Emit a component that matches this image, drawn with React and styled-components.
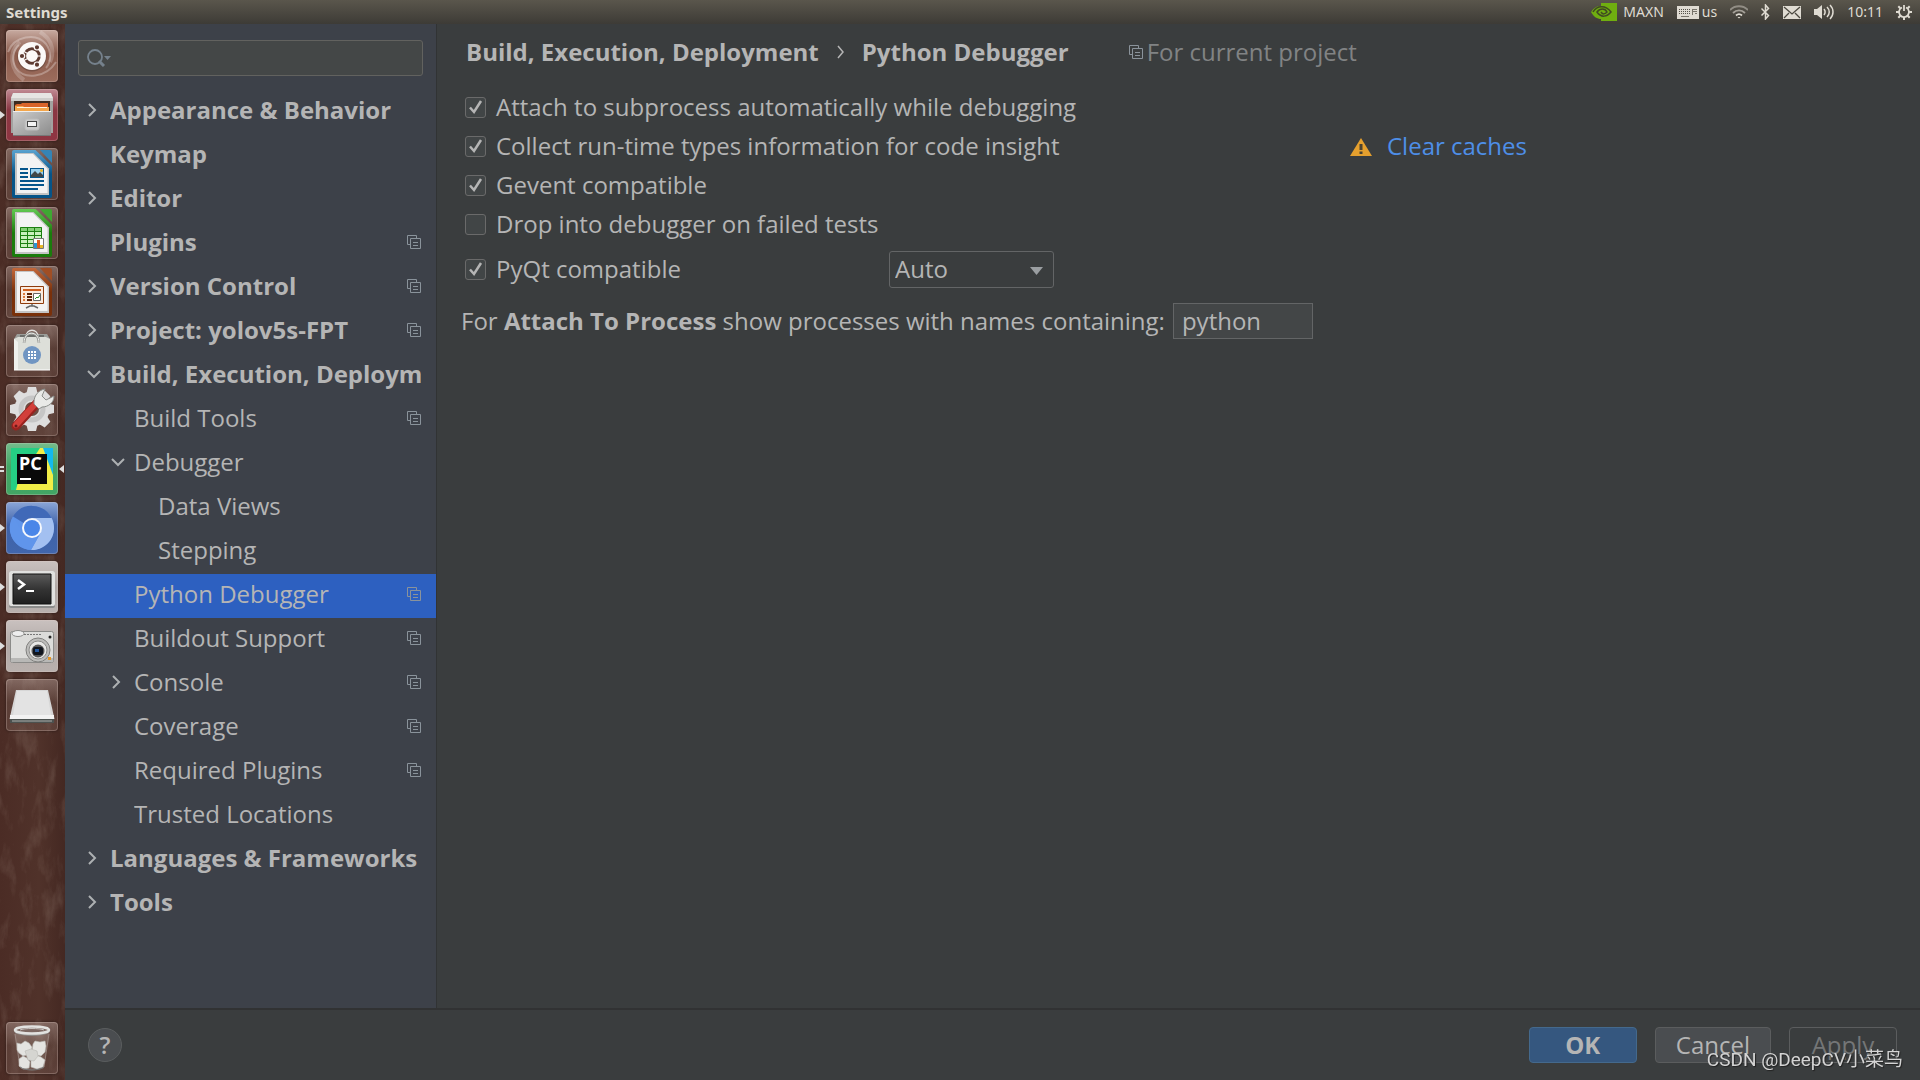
import React, { useState } from 'react';
import styled, { createGlobalStyle, css } from 'styled-components';

const GlobalStyle = createGlobalStyle`
  * {
    box-sizing: border-box;
  }
  body {
    margin: 0;
    background-color: #3a3d3e;
    color: #b5b5b5;
    font-family: "Open Sans", "Noto Sans", sans-serif;
    font-size: 24px;
    line-height: 32px;
  }
  button, input, select {
    font: inherit;
    color: inherit;
  }
  svg {
    display: block;
    flex: none;
  }
`

const Desktop = styled.div`
  display: flex;
  flex-direction: column;
  height: 100vh;
  overflow: hidden;
`

const TopBar = styled.header`
  display: flex;
  align-items: center;
  justify-content: space-between;
  flex: none;
  height: 24px;
  padding: 0 8px 0 6px;
  background: linear-gradient(#5a564c, #3d3b36);
  color: #dfdbd2;
  font-family: "Noto Sans", sans-serif;
  font-size: 14px;
  line-height: 20px;
`

const WindowTitle = styled.strong`
  font-size: 15px;
  font-weight: 700;
`

const Indicators = styled.div`
  display: flex;
  align-items: center;
  gap: 13px;
`

const Indicator = styled.div`
  display: flex;
  align-items: center;
  gap: ${(props) => props.$gap || 3}px;
`

const Body = styled.div`
  display: flex;
  flex: 1;
  min-height: 0;
`

const Launcher = styled.nav`
  position: relative;
  display: flex;
  flex-direction: column;
  justify-content: space-between;
  flex: none;
  width: 65px;
  padding: 6px 0;
  background: linear-gradient(90deg, #4b2c25, #50322a 60%, #442822);
`

const Wood = styled.svg`
  position: absolute;
  top: 0;
  left: 0;
  width: 100%;
  height: 100%;
`

const LauncherList = styled.div`
  display: flex;
  flex-direction: column;
  gap: 7px;
`

const LauncherItem = styled.button`
  position: relative;
  display: block;
  width: 65px;
  height: 52px;
  padding: 0 0 0 6px;
  border: 0;
  background: none;
`

const Tile = styled.span`
  display: block;
  width: 52px;
  height: 52px;
  border-radius: 4px;
  background: ${(props) => props.$fill || 'linear-gradient(rgba(205, 185, 178, 0.42), rgba(120, 95, 86, 0.34) 45%, rgba(120, 92, 84, 0.4))'};
  box-shadow: inset 0 0 0 1px rgba(225, 205, 198, 0.28), 0 0 3px rgba(0, 0, 0, 0.45);
`

const Pip = styled.svg`
  position: absolute;
  top: 21px;
  ${(props) => (props.$right ? 'right: 1px;' : 'left: 0;')}
`

const Dialog = styled.div`
  display: flex;
  flex-direction: column;
  flex: 1;
  min-width: 0;
`

const Panels = styled.div`
  display: flex;
  flex: 1;
  min-height: 0;
`

const Sidebar = styled.aside`
  flex: none;
  width: 372px;
  padding-top: 16px;
  border-right: 1px solid #313334;
  background-color: #3d4149;
`

const SearchBox = styled.label`
  display: flex;
  align-items: center;
  height: 36px;
  margin: 0 13px 14px;
  padding-left: 8px;
  border: 1px solid #62625f;
  border-radius: 3px;
  background-color: #444747;
`

const SearchInput = styled.input`
  flex: 1;
  min-width: 0;
  padding: 0 4px;
  border: 0;
  outline: 0;
  background: none;
`

const TreeRow = styled.button`
  display: flex;
  align-items: center;
  width: 100%;
  height: 44px;
  padding: 0 15px 4px ${(props) => 21 + props.$level * 24}px;
  border: 0;
  background-color: ${(props) => (props.$selected ? '#2d60c0' : 'transparent')};
  text-align: left;
`

const TreeArrow = styled.span`
  flex: none;
  width: 24px;
`

const TreeLabel = styled.span`
  flex: 1;
  min-width: 0;
  overflow: hidden;
  white-space: nowrap;
  ${(props) => props.$bold && css`
    font-weight: 700;
  `}
`

const Content = styled.main`
  flex: 1;
  min-width: 0;
  padding: 12px 24px 0;
`

const Breadcrumbs = styled.h1`
  display: flex;
  align-items: center;
  height: 32px;
  margin: 0 0 20px 5px;
  font-size: 24px;
  line-height: 32px;
  font-weight: 700;
  white-space: nowrap;
`

const CrumbArrow = styled.span`
  padding: 0 18px;
`

const Scope = styled.span`
  display: flex;
  align-items: center;
  gap: 4px;
  margin-left: 60px;
  color: #818384;
  font-weight: 400;
`

const Option = styled.div`
  display: flex;
  align-items: center;
  height: ${(props) => (props.$tall ? 51 : 39)}px;
  padding-left: 4px;
`

const OptionLabel = styled.label`
  display: flex;
  align-items: center;
  gap: 10px;
  min-width: ${(props) => props.$width || 0}px;
  white-space: nowrap;
`

const OptionText = styled.span`
  padding-bottom: 2px;
`

const CheckHolder = styled.span`
  position: relative;
  display: block;
  width: 21px;
  height: 21px;

  svg {
    position: absolute;
    top: 0;
    left: 0;
    pointer-events: none;
  }
`

const CheckInput = styled.input`
  appearance: none;
  display: block;
  width: 21px;
  height: 21px;
  margin: 0;
  border: 1px solid #6a6a6a;
  border-radius: 3px;
  background-color: #414546;
`

const ClearLink = styled.a`
  margin-left: 15px;
  padding-bottom: 2px;
  color: #4e8fe8;
  text-decoration: none;
`

const SelectHolder = styled.span`
  position: relative;

  svg {
    position: absolute;
    top: 16px;
    right: 11px;
    pointer-events: none;
  }
`

const Select = styled.select`
  appearance: none;
  display: block;
  width: 165px;
  height: 37px;
  padding: 0 5px 2px;
  border: 1px solid #636566;
  border-radius: 3px;
  background-color: #3a3d3e;
`

const ProcessRow = styled.div`
  display: flex;
  align-items: center;
  gap: 8px;
  height: 38px;
  margin-top: 7px;
  white-space: nowrap;
`

const ProcessInput = styled.input`
  width: 140px;
  height: 36px;
  padding: 0 8px 2px;
  border: 1px solid #636566;
  background-color: #434647;
`

const Footer = styled.footer`
  display: flex;
  align-items: center;
  gap: 18px;
  flex: none;
  height: 72px;
  padding: 0 23px;
  border-top: 2px solid #313233;
`

const HelpButton = styled.button`
  width: 34px;
  height: 34px;
  margin-right: auto;
  padding: 0;
  border: 1px solid #5a5d5e;
  border-radius: 50%;
  background-color: #4a4d50;
  font-weight: 600;
`

const DialogButton = styled.button`
  min-width: 108px;
  height: 36px;
  padding: 0 20px;
  border: 1px solid ${(props) => (props.$primary ? '#44698c' : '#5b5d5e')};
  border-radius: 4px;
  background-color: ${(props) => (props.$primary ? '#35577f' : '#4a4d50')};
  font-weight: ${(props) => (props.$primary ? 700 : 400)};
  line-height: 32px;

  &:disabled {
    background-color: transparent;
    color: #747677;
  }
`

const Watermark = styled.div`
  position: fixed;
  right: 17px;
  bottom: 6px;
  color: #d4d4d4;
  font-family: Roboto, "Noto Sans CJK SC", sans-serif;
  font-size: 19px;
  line-height: 28px;
  text-shadow: 1px 1px 1px #222222;
  pointer-events: none;
`

const UbuntuIcon = () => (
  <svg width="52" height="52" viewBox="0 0 52 52">
    <g fill="none" stroke="#fff">
      <path d="M2 22C8 6 30 2 40 14c6 8 5 18 0 24" strokeOpacity=".28" strokeWidth="2" />
      <path d="M50 32C40 48 18 50 10 38 5 30 7 20 13 15" strokeOpacity=".28" strokeWidth="2" />
      <path d="M18 50C4 40 2 22 14 12M34 2c14 8 14 22 10 30" strokeOpacity=".2" strokeWidth="4" />
    </g>
    <circle cx="26" cy="27" r="14.5" fill="#000" opacity=".2" />
    <circle cx="26" cy="26" r="14" fill="#fbf8f7" />
    <circle cx="26" cy="26" r="7.2" fill="none" stroke="#5d3a31" strokeWidth="3" />
    <g fill="#5d3a31" stroke="#fbf8f7" strokeWidth="1.2">
      <circle cx="16" cy="26" r="2.7" />
      <circle cx="31" cy="17.3" r="2.7" />
      <circle cx="31" cy="34.7" r="2.7" />
    </g>
    <path d="M26 26L18 21.500M26 26L18 30.500M26 26h10" stroke="#fbf8f7" strokeWidth="1.200" />
    <circle cx="26" cy="26" r="5.6" fill="#fbf8f7" />
  </svg>
)

const FilesIcon = () => (
  <svg width="52" height="52" viewBox="0 0 52 52">
    <defs>
      <linearGradient id="drawer" x1="0" y1="0" x2="1" y2="1">
        <stop offset="0" stopColor="#cdcdcd" />
        <stop offset="1" stopColor="#8b8b8b" />
      </linearGradient>
    </defs>
    <path d="M7 4h38l2 5v35H5V9z" fill="#a3a2a0" />
    <path d="M7 4h38l2 5H5z" fill="#e6e5e3" />
    <path d="M5 9h42v3H5z" fill="#cfcecc" />
    <path d="M8 12h36v11H8z" fill="#3c2a20" />
    <path d="M9 16l2-1h4l1-1h26v9H9z" fill="#d9642a" />
    <path d="M9 17h8l1 1h25v5H9z" fill="#f4a64b" />
    <path d="M11 18.500h30" stroke="#fff3df" strokeWidth="1" />
    <path d="M7 22h38v25H7z" fill="url(#drawer)" />
    <path d="M7 22.500h38" stroke="#eee" strokeWidth="1" />
    <path d="M7 46.500h38" stroke="#777" strokeWidth="1" />
    <rect x="19" y="30" width="14" height="11" rx="2" fill="#c9c9c9" stroke="#bbb" />
    <rect x="21.500" y="32.500" width="9" height="5" fill="#f4f4f4" stroke="#444" />
  </svg>
)

// page shape shared by the three LibreOffice apps
const OfficePage = ({ light, dark, corner, id, children }) => (
  <svg width="52" height="52" viewBox="0 0 52 52">
    <defs>
      <linearGradient id={id} x1="0" y1="0" x2="0" y2="1">
        <stop offset="0" stopColor={light} />
        <stop offset=".5" stopColor={dark} />
        <stop offset="1" stopColor={dark} />
      </linearGradient>
    </defs>
    <path d="M8 2h21.500L46 18v30a2 2 0 0 1-2 2H8a2 2 0 0 1-2-2V4a2 2 0 0 1 2-2z" fill={`url(#${id})`} />
    <path d="M34 2h10a2 2 0 0 1 2 2v11z" fill={corner} />
    <path d="M9 5h18.500L43 20.500V47H9z" fill="#c4c4c4" />
    <path d="M11 6h16l14.500 15V45H11z" fill="#f3f3f3" />
    {children}
  </svg>
)

const WriterIcon = () => (
  <OfficePage id="writer" light="#5aa3d0" dark="#065488" corner="#3584b5">
    <path d="M14 21h8M14 25h8M14 29h8M14 33h24M14 37h24M14 41h18" stroke="#05558b" strokeWidth="2" />
    <path d="M24 20h14v10H24z" fill="#05558b" />
    <path d="M25 21h12v8H25z" fill="#9bd0ee" />
    <circle cx="35.500" cy="22.500" r="1.500" fill="#e6b429" />
    <path d="M25 29v-2l4-4 3 3 2-2 3 3v2z" fill="#3f4648" />
  </OfficePage>
)

const CalcIcon = () => (
  <OfficePage id="calc" light="#62c952" dark="#1a7c0c" corner="#3fa832">
    <path d="M14 20h22v21H14z" fill="#c9f0bd" />
    <path d="M14 20h22v4H14z" fill="#86d078" />
    <path d="M14.500 20.500h21v20h-21zM14 24.500h22M14 28.500h22M14 32.500h22M14 36.500h22M21.500 20v21M28.500 20v21" fill="none" stroke="#1c8011" />
    <path d="M27.500 31.500h10v10h-10z" fill="#fff" stroke="#777" />
    <path d="M28 36h3v5h-3z" fill="#2c97d3" />
    <path d="M31 33h3v8h-3z" fill="#dd5d1e" />
    <path d="M34 38h3v3h-3z" fill="#e6b92b" />
  </OfficePage>
)

const ImpressIcon = () => (
  <OfficePage id="impress" light="#c3683a" dark="#79300a" corner="#a04e24">
    <path d="M14.500 20.500h23v17h-23z" fill="#fbeadd" stroke="#8e3b0c" />
    <path d="M17 24h18" stroke="#d0601f" strokeWidth="2" />
    <path d="M17 28h2M17 31h2M17 34h2" stroke="#dd7a3c" strokeWidth="2" />
    <path d="M21 28h5M21 31h5M21 34h5" stroke="#5e2205" strokeWidth="2" />
    <path d="M27.500 27.500h7v7h-7z" fill="#fff" stroke="#666" />
    <path d="M29 33l2-2 1 1 2-3" fill="none" stroke="#2a8f2a" />
    <path d="M26 38v2M20 42l4-2h4l4 2" fill="none" stroke="#666" strokeWidth="1.500" />
  </OfficePage>
)

const SoftwareIcon = () => (
  <svg width="52" height="52" viewBox="0 0 52 52">
    <path d="M11 9h30l3 5H8z" fill="#9b9d99" />
    <path d="M14 10h24v3H14z" fill="#6c6e6b" />
    <path d="M8 14l4-2h28l4 2v31H8z" fill="#dddfd9" />
    <path d="M8 14l4 3v28H8z" fill="#f0f1ed" />
    <path d="M8 45h36" stroke="#fff" />
    <path d="M20 12c0-9 12-9 12 0" fill="none" stroke="#e2e2df" strokeWidth="1.500" />
    <path d="M18 18c0-13 15-13 15 0" fill="none" stroke="#8f918d" strokeWidth="2.500" />
    <path d="M18 18c0-13 15-13 15 0" fill="none" stroke="#f1f1ee" strokeWidth="1" />
    <circle cx="26" cy="30" r="9" fill="#7095c2" />
    <path d="M22 27h8M22 30h8M22 33h8" stroke="#fff" strokeWidth="2" strokeDasharray="2 1" />
  </svg>
)

const SettingsIcon = () => (
  <svg width="52" height="52" viewBox="0 0 52 52">
    <g fill="#dedede">
      {[0, 45, 90, 135].map((angle) => (
        <path key={angle} d="M22 3h8l1.500 6v32L30 47h-8l-1.500-6V9z" transform={`rotate(${angle} 26 25)`} />
      ))}
      <circle cx="26" cy="25" r="17.500" />
    </g>
    <circle cx="26" cy="25" r="11" fill="none" stroke="#c6c6c6" strokeWidth="5" />
    <circle cx="26" cy="25" r="7" fill="#6d4d43" />
    <path d="M10 42L31 19" stroke="#98231f" strokeWidth="9" strokeLinecap="round" />
    <path d="M10 41L31 18" stroke="#d23f3a" strokeWidth="6" strokeLinecap="round" />
    <path d="M28 18c0-7 5-12 11-13l-3 7 4 4 8-4c0 7-6 11-12 11l-3 2-5-5z" fill="#e9eae8" stroke="#8b8e8b" />
    <circle cx="10" cy="42" r="1.500" fill="#6b1c19" />
  </svg>
)

const PyCharmIcon = () => (
  <svg width="52" height="52" viewBox="0 0 52 52">
    <path d="M5 5h42v42H5z" fill="#21d789" />
    <path d="M36 5h11v27L34 18z" fill="#13b9ee" />
    <path d="M34 5h3l10 27v15H10l2-8z" fill="#f1ee47" />
    <path d="M5 5h28L12 40l-4 7H5z" fill="#25ce83" />
    <path d="M11 11h30v30H11z" fill="#090909" />
    <path d="M14 36h11" stroke="#fff" strokeWidth="2" />
    <text x="13" y="27" fill="#fff" fontFamily="Noto Sans, sans-serif" fontSize="18" fontWeight="700">PC</text>
  </svg>
)

const ChromiumIcon = () => (
  <svg width="52" height="52" viewBox="0 0 52 52">
    <circle cx="26" cy="26" r="22" fill="#5f94ea" />
    <path d="M26 26L7 14.500A22 22 0 0 1 45.500 16z" fill="#4069b8" />
    <path d="M26 16h19.600A22 22 0 0 1 25 48l9.500-17z" fill="#a3c0f1" />
    <path d="M7 14.500A22 22 0 0 0 25 48l9-16-17-1z" fill="#6095eb" />
    <circle cx="26" cy="26" r="10" fill="#f6f8fc" />
    <circle cx="26" cy="26" r="8" fill="#4a86e8" />
  </svg>
)

const TerminalIcon = () => (
  <svg width="52" height="52" viewBox="0 0 52 52">
    <defs>
      <linearGradient id="screen" x1="0" y1="0" x2="0" y2="1">
        <stop offset="0" stopColor="#5b5b5b" />
        <stop offset=".5" stopColor="#343434" />
        <stop offset="1" stopColor="#1f1f1f" />
      </linearGradient>
    </defs>
    <rect x="3" y="10" width="46" height="37" rx="2" fill="#8c8c8b" />
    <rect x="3" y="10" width="46" height="35" rx="2" fill="#e1e1df" />
    <path d="M7 13h38v30H7z" fill="url(#screen)" stroke="#111" />
    <path d="M12 19l6 4.500-6 4.500" fill="none" stroke="#fff" strokeWidth="2.500" />
    <path d="M20 30h8" stroke="#fff" strokeWidth="2" />
  </svg>
)

const CameraIcon = () => (
  <svg width="52" height="52" viewBox="0 0 52 52">
    <rect x="4.500" y="11.500" width="43" height="31" rx="2" fill="#dcdcda" stroke="#8b8b89" />
    <path d="M5 38h42v4H5z" fill="#b8b8b6" />
    <ellipse cx="12" cy="13.500" rx="6" ry="3" fill="#eee" stroke="#8b8b89" />
    <path d="M18 14.500h17" stroke="#777" strokeDasharray="2 1" />
    <circle cx="44" cy="17" r="1.500" fill="#222" />
    <circle cx="32" cy="30" r="12" fill="#bdbdbb" stroke="#81817f" />
    <circle cx="32" cy="30" r="9" fill="#e8e8e6" stroke="#8c8c8a" />
    <circle cx="32" cy="31" r="6.500" fill="#575757" />
    <rect x="27" y="27" width="10" height="8" rx="2" fill="#10151d" />
    <path d="M29 29h4v3h-4z" fill="#24569b" />
    <path d="M42 37h3v3h-3z" fill="#e59523" />
  </svg>
)

const DriveIcon = () => (
  <svg width="52" height="52" viewBox="0 0 52 52">
    <path d="M10 11h32l6.500 29H3.500z" fill="#d6d6d6" />
    <path d="M11 12h30l4 24H7z" fill="#e3e3e3" />
    <path d="M4 36h44v4H4z" fill="#f2f2f2" />
    <path d="M4 40h44v4H4z" fill="#4c514f" />
    <path d="M6 42h40" stroke="#a9adab" />
  </svg>
)

const TrashIcon = () => (
  <svg width="52" height="52" viewBox="0 0 52 52">
    <path d="M9 9l5 37c5 3 19 3 24 0l5-37z" fill="#e8e0dd" opacity=".14" />
    <g fill="#e4e4e1" stroke="#b9b9b4" strokeWidth=".6">
      <path d="M11 21l4 1 4-3 4 2 3 4-1 6-4 2-4 1-4-3-2-3z" />
      <path d="M27 22l2-3 5 1 5-1 1 5-1 6-4 4-5-1-4-4z" />
      <path d="M13 37l4-3 4 2 3 4-1 6-6 1-4-3z" />
      <path d="M25 36l5-3 5 2 4 3-2 7-6 2-6-2z" />
      <path d="M19 29l6-2 6 2 1 5-4 5-6-1z" fill="#d5d5d1" />
    </g>
    <path d="M14 45c5 4 19 4 24 0" fill="none" stroke="#777" />
    <path d="M9 12l5 33M43 12l-5 33" stroke="#d8d0cd" strokeOpacity=".4" />
    <ellipse cx="26" cy="9" rx="18" ry="5" fill="#8f8d8a" />
    <ellipse cx="26" cy="8" rx="17" ry="3.500" fill="#7d6862" stroke="#e2e2e0" strokeWidth="2.500" />
    <path d="M14 8c4-2 20-2 24 0" fill="none" stroke="#c9c5c2" />
  </svg>
)

const grey = 'linear-gradient(#c9c1bf, #b1a9a6 50%, #b9b1ae)';

const apps = [
  { name: 'Ubuntu', icon: UbuntuIcon, fill: 'linear-gradient(#c7aaa0, #8b5b4c 45%, #9c6d5d)' },
  { name: 'Files', icon: FilesIcon, fill: 'linear-gradient(#c18b94, #8a3743 40%, #8f3542)', running: true },
  { name: 'Writer', icon: WriterIcon },
  { name: 'Calc', icon: CalcIcon },
  { name: 'Impress', icon: ImpressIcon },
  { name: 'Software', icon: SoftwareIcon },
  { name: 'System Settings', icon: SettingsIcon },
  { name: 'PyCharm', icon: PyCharmIcon, fill: 'linear-gradient(#74bd8c, #44a766 45%, #42a564)', active: true },
  { name: 'Chromium', icon: ChromiumIcon, fill: 'linear-gradient(#8ba6d8, #3f62a8 45%, #4166ac)', running: true },
  { name: 'Terminal', icon: TerminalIcon, fill: grey, running: true },
  { name: 'Camera', icon: CameraIcon, fill: grey, running: true },
  { name: 'Drive', icon: DriveIcon },
];

const tree = [
  { name: 'Appearance & Behavior', level: 0, arrow: 'right' },
  { name: 'Keymap', level: 0 },
  { name: 'Editor', level: 0, arrow: 'right' },
  { name: 'Plugins', level: 0, project: true },
  { name: 'Version Control', level: 0, arrow: 'right', project: true },
  { name: 'Project: yolov5s-FPT', level: 0, arrow: 'right', project: true },
  { name: 'Build, Execution, Deployment', level: 0, arrow: 'down' },
  { name: 'Build Tools', level: 1, project: true },
  { name: 'Debugger', level: 1, arrow: 'down' },
  { name: 'Data Views', level: 2 },
  { name: 'Stepping', level: 2 },
  { name: 'Python Debugger', level: 1, project: true },
  { name: 'Buildout Support', level: 1, project: true },
  { name: 'Console', level: 1, arrow: 'right', project: true },
  { name: 'Coverage', level: 1, project: true },
  { name: 'Required Plugins', level: 1, project: true },
  { name: 'Trusted Locations', level: 1 },
  { name: 'Languages & Frameworks', level: 0, arrow: 'right' },
  { name: 'Tools', level: 0, arrow: 'right' },
];

const ProjectIcon = () => (
  <svg width="14" height="14" viewBox="0 0 14 14" fill="none" stroke="#8a939b">
    <path d="M3 9.500H.500v-9h9V3" />
    <path d="M3.500 3.500h10v10h-10zM6 7.500h5M6 10.500h5" />
  </svg>
)

const Arrow = ({ kind }) => (
  <svg width="16" height="16" viewBox="0 0 16 16" fill="none" stroke="#adb0b2" strokeWidth="2">
    {kind === 'right' ? <path d="M3 2l6 6-6 6" /> : <path d="M2 5l6 6 6-6" />}
  </svg>
)

const Checkbox = ({ label, checked: initial, width }) => {
  const [checked, setChecked] = useState(initial);

  return (
    <OptionLabel $width={width}>
      <CheckHolder>
        <CheckInput type="checkbox" checked={checked} onChange={() => setChecked(!checked)} />
        {checked ? (
          <svg width="21" height="21" viewBox="0 0 21 21" fill="none" stroke="#b5b5b5" strokeWidth="2.500">
            <path d="M5 10.500l4 4.500 7-11" />
          </svg>
        ) : null}
      </CheckHolder>
      <OptionText>{label}</OptionText>
    </OptionLabel>
  )
}

const StatusIcons = () => (
  <Indicators>
    <Indicator $gap={6}>
      <svg width="26" height="18" viewBox="0 0 26 18">
        <path d="M10 0h16v18H10z" fill="#6fae10" />
        <path d="M10 3C5 3 2 6 0 9c3 5 6 7 10 7z" fill="#6fae10" />
        <path d="M2 9c4-7 13-7 18 0-4 5-10 6-14 0 3-4 8-4 10 0-2 2-4 3-6 0" fill="none" stroke="#3f4a22" strokeWidth="1.500" />
      </svg>
      MAXN
    </Indicator>
    <Indicator>
      <svg width="22" height="13" viewBox="0 0 22 13">
        <path d="M0 0h22v13H0z" fill="#dfdbd2" />
        <path d="M2 3.500h12M2 5.500h12M2 7.500h12" stroke="#55524a" strokeDasharray="1 1" />
        <path d="M4 10.500h8M16 3.500h4M16 5.500h4M18 7.500h2M15.500 3v6" stroke="#77736a" />
      </svg>
      us
    </Indicator>
    <svg width="18" height="14" viewBox="1 0 18 14" fill="none" stroke="#dfdbd2" strokeWidth="1.800">
      <path d="M1 5c5-5 13-5 18 0" opacity=".45" />
      <path d="M4 8c3.500-3.500 8.500-3.500 12 0" opacity=".6" />
      <path d="M7 10.500c2-1.800 4-1.800 6 0" />
      <path d="M8.500 12h3L10 13.500z" fill="#dfdbd2" stroke="none" />
    </svg>
    <svg width="9" height="16" viewBox="0 0 9 16" fill="none" stroke="#dfdbd2" strokeWidth="1.500">
      <path d="M.500 4.500l7 7L4.500 15V1l3 3.500-7 7" />
    </svg>
    <svg width="18" height="13" viewBox="0 0 18 13">
      <path d="M0 0h18v13H0z" fill="#dfdbd2" />
      <path d="M1 1l8 7 8-7M1 12l5-5M17 12l-5-5" fill="none" stroke="#4a473f" strokeWidth="1.300" />
    </svg>
    <svg width="20" height="16" viewBox="0 0 20 16">
      <path d="M0 5h3l5-4v14l-5-4H0z" fill="#dfdbd2" />
      <path d="M10 5c1.500 2 1.500 4 0 6M13 3c3 3 3 7 0 10M16 1c4 4 4 10 0 14" fill="none" stroke="#dfdbd2" strokeWidth="1.500" />
    </svg>
    <time>10:11</time>
    <svg width="16" height="16" viewBox="0 0 16 16" fill="none" stroke="#dfdbd2">
      <path d="M6 3.500a5 5 0 1 0 4 0M8 1v6" strokeWidth="1.800" />
      <path d="M0 8h3M13 8h3M8 13v3M2.300 2.300l2 2M11.700 4.300l2-2M2.300 13.700l2-2M11.700 11.700l2 2" strokeWidth="2" />
    </svg>
  </Indicators>
)

const SettingsLauncher = () => (
  <Launcher aria-label="Launcher">
    <Wood>
      <filter id="wood">
        <feTurbulence type="fractalNoise" baseFrequency=".09 .03" numOctaves="5" seed="11" />
        <feColorMatrix values="0 0 0 0 .6  0 0 0 0 .5  0 0 0 0 .42  1.400 0 0 0 -.66" />
      </filter>
      <rect width="100%" height="100%" filter="url(#wood)" opacity=".28" />
    </Wood>
    <LauncherList>
      {apps.map(({ name, icon: Icon, fill, running, active }) => (
        <LauncherItem key={name} type="button" aria-label={name}>
          <Tile $fill={fill}><Icon /></Tile>
          {running ? (
            <Pip width="5" height="10" viewBox="0 0 5 10"><path d="M0 1l5 4-5 4z" fill="#dedede" /></Pip>
          ) : null}
          {active ? (
            <>
              <Pip width="5" height="10" viewBox="0 0 5 10"><path d="M0 3h4M0 7h4" stroke="#dedede" strokeWidth="2" /></Pip>
              <Pip $right width="5" height="10" viewBox="0 0 5 10"><path d="M5 1L0 5l5 4z" fill="#dedede" /></Pip>
            </>
          ) : null}
        </LauncherItem>
      ))}
    </LauncherList>
    <LauncherItem type="button" aria-label="Trash">
      <Tile><TrashIcon /></Tile>
    </LauncherItem>
  </Launcher>
)

const SettingsTree = () => {
  const [selected, setSelected] = useState('Python Debugger');

  return (
    <Sidebar>
      <SearchBox>
        <svg width="24" height="18" viewBox="0 0 24 18" fill="none" stroke="#75818c" strokeWidth="1.800">
          <circle cx="8" cy="8" r="7" />
          <path d="M12 12l5 5" strokeWidth="3" />
          <path d="M17 7h7l-3.500 4z" fill="#75818c" stroke="none" />
        </svg>
        <SearchInput type="text" aria-label="Search settings" />
      </SearchBox>
      {tree.map((node) => (
        <TreeRow
          key={node.name}
          type="button"
          $level={node.level}
          $selected={node.name === selected}
          onClick={() => setSelected(node.name)}
        >
          <TreeArrow>{node.arrow ? <Arrow kind={node.arrow} /> : null}</TreeArrow>
          <TreeLabel $bold={node.level === 0}>{node.name}</TreeLabel>
          {node.project ? <ProjectIcon /> : null}
        </TreeRow>
      ))}
    </Sidebar>
  )
}

const App = () => {
  const [filter, setFilter] = useState('python');

  return (
    <Desktop>
      <GlobalStyle />
      <TopBar>
        <WindowTitle>Settings</WindowTitle>
        <StatusIcons />
      </TopBar>
      <Body>
        <SettingsLauncher />
        <Dialog>
          <Panels>
            <SettingsTree />
            <Content>
              <Breadcrumbs>
                <span>Build, Execution, Deployment</span>
                <CrumbArrow>
                  <svg width="7" height="14" viewBox="0 0 7 14" fill="none" stroke="#b5b5b5" strokeWidth="1.500">
                    <path d="M1 1l5 6-5 6" />
                  </svg>
                </CrumbArrow>
                <span>Python Debugger</span>
                <Scope>
                  <ProjectIcon />
                  For current project
                </Scope>
              </Breadcrumbs>
              <Option>
                <Checkbox label="Attach to subprocess automatically while debugging" checked />
              </Option>
              <Option>
                <Checkbox label="Collect run-time types information for code insight" checked width={885} />
                <svg width="22" height="18" viewBox="0 0 22 18">
                  <path d="M11 0l11 18H0z" fill="#e5a02e" />
                  <path d="M9.500 6h3v6h-3zM9.500 13.500h3v2.500h-3z" fill="#4a4232" />
                </svg>
                <ClearLink href="#">Clear caches</ClearLink>
              </Option>
              <Option>
                <Checkbox label="Gevent compatible" checked />
              </Option>
              <Option>
                <Checkbox label="Drop into debugger on failed tests" checked={false} />
              </Option>
              <Option $tall>
                <Checkbox label="PyQt compatible" checked width={424} />
                <SelectHolder>
                  <Select aria-label="PyQt backend" defaultValue="Auto">
                    <option>Auto</option>
                    <option>PyQt4</option>
                    <option>PyQt5</option>
                  </Select>
                  <svg width="13" height="8" viewBox="0 0 13 8">
                    <path d="M0 0h13L6.500 8z" fill="#9a9ea1" />
                  </svg>
                </SelectHolder>
              </Option>
              <ProcessRow>
                <label htmlFor="process">For <b>Attach To Process</b> show processes with names containing:</label>
                <ProcessInput
                  id="process"
                  type="text"
                  value={filter}
                  onChange={(event) => setFilter(event.target.value)}
                />
              </ProcessRow>
            </Content>
          </Panels>
          <Footer>
            <HelpButton type="button" aria-label="Help">?</HelpButton>
            <DialogButton type="button" $primary>OK</DialogButton>
            <DialogButton type="button">Cancel</DialogButton>
            <DialogButton type="button" disabled>Apply</DialogButton>
          </Footer>
        </Dialog>
      </Body>
      <Watermark>CSDN @DeepCV小菜鸟</Watermark>
    </Desktop>
  )
}

export default App;
